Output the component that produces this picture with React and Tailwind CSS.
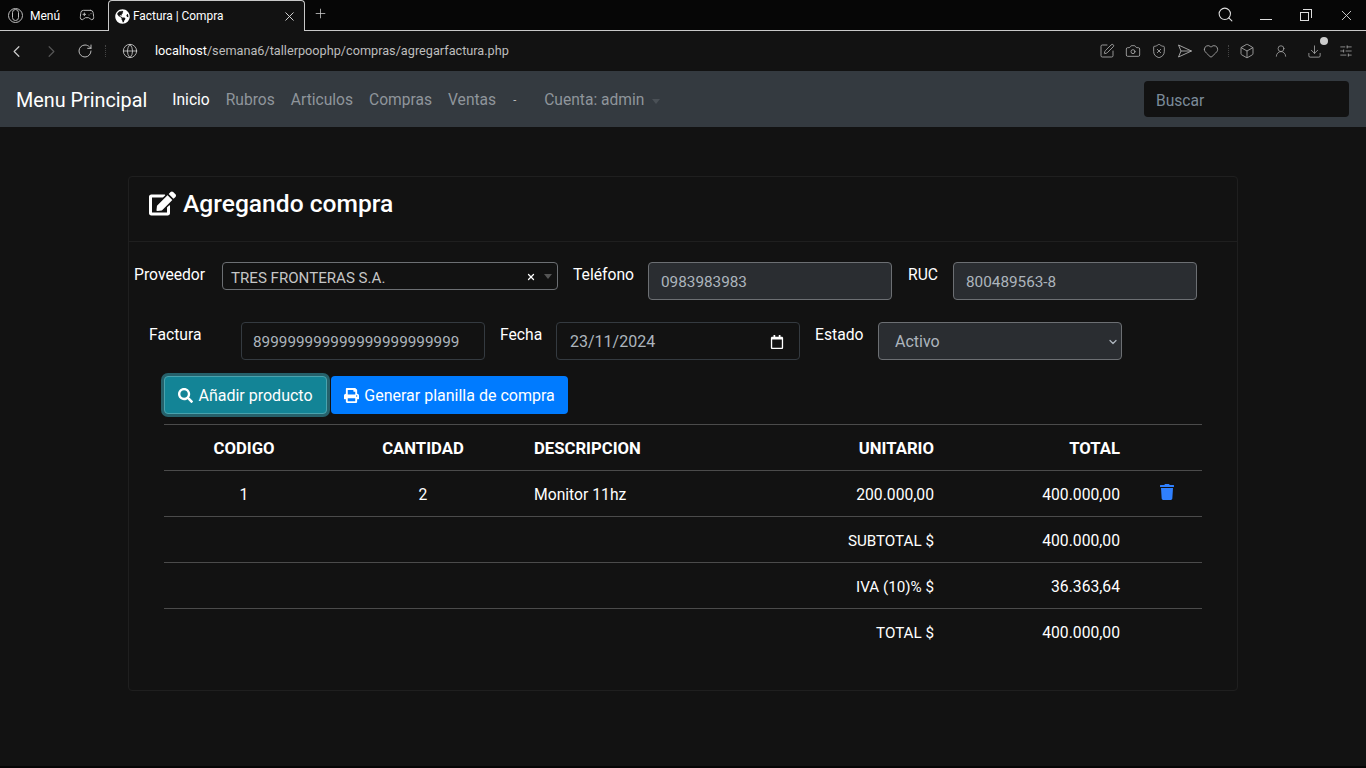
import { FaEdit, FaSearch, FaPrint, FaTrash, FaGlobeAmericas, FaRegCalendar } from "react-icons/fa";
import {
  Gamepad2,
  X,
  Plus,
  ChevronLeft,
  ChevronRight,
  RotateCw,
  Globe,
  Search,
  Camera,
  ShieldX,
  Heart,
  Box,
  UserRound,
  Download,
  SlidersHorizontal,
  SquarePen,
  ChevronDown,
} from "lucide-react";

const font = { fontFamily: "Roboto" };

function ToolbarIcon({ children, className = "" }) {
  return <div className={"flex w-[26px] justify-center " + className}>{children}</div>;
}

function BrowserChrome() {
  return (
    <div className="text-white">
      {/* Tab strip */}
      <div className="flex h-[31px] items-start bg-[#060606] border-b border-[#c8c8c8]">
        <div className="flex h-[30px] w-[108px] items-center pl-2">
          <span className="flex h-[15px] w-[15px] items-center justify-center rounded-full border border-[#bbb]">
            <span className="h-[12px] w-[7px] rounded-full border border-[#bbb]" />
          </span>
          <span className="ml-[7px] pt-[1px] text-[12px]">Menú</span>
          <Gamepad2 size={16} strokeWidth={1.5} className="ml-[19px] text-[#bbb]" />
        </div>
        <div className="flex h-[31px] w-[197px] items-center rounded-t-[4px] border-x border-t border-[#c8c8c8] bg-[#121212] pl-[6px] pr-[7px]">
          <FaGlobeAmericas size={15} />
          <span className="ml-[3px] pt-[1px] text-[11.9px]">Factura | Compra</span>
          <X size={15} strokeWidth={1.5} className="ml-auto text-[#ddd]" />
        </div>
        <Plus size={15} strokeWidth={1.25} className="ml-[8px] mt-[6px] text-[#ccc]" />
        <div className="ml-auto flex h-[30px] items-center text-[#ddd]">
          <Search size={17} strokeWidth={1.5} className="-mt-[2px]" />
          <div className="ml-[26px] mt-2 h-px w-[12px] bg-[#ddd]" />
          <div className="relative ml-[28px] h-[12px] w-[12px]">
            <div className="absolute bottom-0 left-0 h-[9px] w-[9px] border border-[#ddd]" />
            <div className="absolute right-0 top-0 h-[9px] w-[9px] border-r border-t border-[#ddd]" />
          </div>
          <X size={17} strokeWidth={1.25} className="ml-[26px] mr-[11px]" />
        </div>
      </div>
      {/* Address bar */}
      <div className="flex h-[40px] items-center bg-[#121212]">
        <ChevronLeft size={19} strokeWidth={1.5} className="ml-[7px] text-[#ccc]" />
        <ChevronRight size={19} strokeWidth={1.5} className="ml-[16px] text-[#555]" />
        <RotateCw size={16} strokeWidth={1.5} className="ml-[16px] text-[#bbb]" />
        <div className="ml-[12px] h-3 border-l border-dotted border-[#444]" />
        <Globe size={16} strokeWidth={1.25} className="ml-[16px] text-[#ccc]" />
        <span className="ml-[17px] text-[12.7px] text-[#bdbdbd]">
          <span className="text-white">localhost</span>/semana6/tallerpoophp/compras/agregarfactura.php
        </span>
        <div className="ml-auto mr-[7px] flex items-center text-[#b0b0b0]">
          <ToolbarIcon><SquarePen size={16} strokeWidth={1.25} /></ToolbarIcon>
          <ToolbarIcon><Camera size={16} strokeWidth={1.25} /></ToolbarIcon>
          <ToolbarIcon><ShieldX size={16} strokeWidth={1.25} /></ToolbarIcon>
          <ToolbarIcon>
            <svg width="16" height="16" viewBox="0 0 16 16" fill="none" stroke="currentColor" strokeWidth="0.9" strokeLinejoin="round">
              <path d="M1.5 2 L14.5 8 L1.5 14 L4 8 Z M4 8 H14.5" />
            </svg>
          </ToolbarIcon>
          <ToolbarIcon><Heart size={16} strokeWidth={1.25} /></ToolbarIcon>
          <div className="ml-1 h-3 border-l border-dotted border-[#444]" />
          <ToolbarIcon className="ml-[5px]"><Box size={16} strokeWidth={1.25} /></ToolbarIcon>
          <ToolbarIcon className="ml-[8px]"><UserRound size={14} strokeWidth={1.25} /></ToolbarIcon>
          <ToolbarIcon className="ml-[7px]">
            <div className="relative">
              <Download size={15} strokeWidth={1.25} />
              <span className="absolute -right-[6px] -top-[7px] h-[8px] w-[8px] rounded-full bg-[#ccc]" />
            </div>
          </ToolbarIcon>
          <ToolbarIcon className="ml-[6px]"><SlidersHorizontal size={14} strokeWidth={1.25} /></ToolbarIcon>
        </div>
      </div>
    </div>
  );
}

function Navbar() {
  return (
    <nav className="flex h-[56px] items-center bg-[#343a40] pl-4 pr-[17px]">
      <a className="pt-[3px] text-[19.8px] text-white">Menu Principal</a>
      <div className="ml-[25px] flex items-center pt-[4px] text-[15.6px] text-[#8f959b]">
        <a className="text-white">Inicio</a>
        <a className="ml-4">Rubros</a>
        <a className="ml-4">Articulos</a>
        <a className="ml-4">Compras</a>
        <a className="ml-4">Ventas</a>
        <a className="ml-[17px] text-[11px] text-[#c8c8c8]">-</a>
        <a className="ml-[28px]">Cuenta: admin</a>
        <span className="ml-2 mt-0.5 border-x-[4px] border-t-[5px] border-x-transparent border-t-[#4a5056]" />
      </div>
      <input
        placeholder="Buscar"
        className="ml-auto h-[36px] w-[205px] rounded-[4px] bg-[#121212] pl-[12px] pt-[3px] text-[15.6px] text-white placeholder:text-[#7b8a99]"
      />
    </nav>
  );
}

function Label({ className, children }) {
  return <label className={"mt-[1px] text-[15.7px] leading-6 text-white " + className}>{children}</label>;
}

function FilledInput({ value }) {
  return (
    <input
      readOnly
      value={value}
      className="h-[38px] w-[244px] rounded-[4px] border border-[#6c6f73] bg-[#2a2d31] px-3 pt-[1px] text-[15.3px] text-[#adb5bd]"
    />
  );
}

function CompraForm() {
  return (
    <div>
      <div className="flex items-start pt-5">
        <Label className="ml-[5px] w-[88px]">Proveedor</Label>
        <div className="flex h-[28px] w-[336px] items-center rounded-[4px] border border-[#6c6f73] pl-2 pr-[5px] text-[#c6c6c6]">
          <span className="pt-[4px] text-[15.1px]">TRES FRONTERAS S.A.</span>
          <X size={10} strokeWidth={3} className="ml-auto mt-[2px] text-white" />
          <span className="ml-[8px] border-x-[4px] border-t-[5px] border-x-transparent border-t-[#555]" />
        </div>
        <Label className="ml-[15px] w-[75px]">Teléfono</Label>
        <FilledInput value="0983983983" />
        <Label className="ml-4 w-[45px]">RUC</Label>
        <FilledInput value="800489563-8" />
      </div>
      <div className="mt-[22px] flex items-start">
        <Label className="ml-[20px] w-[92px]">Factura</Label>
        <input
          readOnly
          value="899999999999999999999999"
          className="h-[38px] w-[244px] rounded-[4px] border border-[#343a40] bg-transparent pl-[11px] pt-[1px] text-[15.3px] text-[#adb5bd]"
        />
        <Label className="ml-[15px] w-[56px]">Fecha</Label>
        <div className="flex h-[38px] w-[244px] items-center rounded-[4px] border border-[#343a40] pl-[13px] pr-[15px] pt-[1px] text-[16px] text-[#adb5bd]">
          <span>23/11/2024</span>
          <FaRegCalendar size={14} className="ml-auto text-white" />
        </div>
        <Label className="ml-[15px] w-[63px]">Estado</Label>
        <div className="flex h-[38px] w-[244px] items-center rounded-[4px] border border-[#6c6f73] bg-[#2a2d31] pl-4 pr-[2px] pt-[1px] text-[16px] text-[#adb5bd]">
          <span>Activo</span>
          <ChevronDown size={12} strokeWidth={2.5} className="ml-auto" />
        </div>
      </div>
      <div className="ml-[35px] mt-4 flex items-center">
        <button className="flex h-[38px] w-[163px] items-center justify-center gap-[5px] rounded-[4px] border border-[#4aa3ae] bg-[#138496] pt-[1px] text-[16px] text-white shadow-[0_0_0_3px_rgba(58,176,195,0.5)]">
          <FaSearch size={15} />
          Añadir producto
        </button>
        <button className="ml-1 flex h-[38px] w-[237px] items-center justify-center gap-[5px] rounded-[4px] bg-[#007bff] pt-[1px] text-[16px] text-white">
          <FaPrint size={15} />
          Generar planilla de compra
        </button>
      </div>
    </div>
  );
}

const summaryRows = [
  ["SUBTOTAL $", "400.000,00"],
  ["IVA (10)% $", "36.363,64"],
  ["TOTAL $", "400.000,00"],
];

function CompraTable() {
  const cell = "h-[46px] border-t border-[#4b4b4b] px-3 pt-[2px] text-white ";
  const td = cell + "text-[15.7px] ";
  const th = cell + "text-[16.7px] font-bold ";
  return (
    <table className="ml-[35px] mt-[10px] w-[1038px] table-fixed border-collapse">
      <colgroup>
        <col className="w-[160px]" />
        <col className="w-[198px]" />
        <col className="w-[236px]" />
        <col className="w-[188px]" />
        <col className="w-[186px]" />
        <col className="w-[70px]" />
      </colgroup>
      <thead>
        <tr>
          <th className={th + "text-center"}>CODIGO</th>
          <th className={th + "text-center"}>CANTIDAD</th>
          <th className={th + "text-left"}>DESCRIPCION</th>
          <th className={th + "text-right"}>UNITARIO</th>
          <th className={th + "text-right"}>TOTAL</th>
          <th className={th} />
        </tr>
      </thead>
      <tbody>
        <tr>
          <td className={td + "text-center"}>1</td>
          <td className={td + "text-center"}>2</td>
          <td className={td}>Monitor 11hz</td>
          <td className={td + "text-right"}>200.000,00</td>
          <td className={td + "text-right"}>400.000,00</td>
          <td className={td + "pl-[27px] pb-[5px]"}>
            <FaTrash size={16} className="text-[#2f80ff]" />
          </td>
        </tr>
        {summaryRows.map(([label, amount]) => (
          <tr key={label}>
            <td className={td} />
            <td className={td} />
            <td className={td} />
            <td className={td + "text-right"}>
              <span className="text-[15.2px]">{label}</span>
            </td>
            <td className={td + "text-right"}>{amount}</td>
            <td className={td} />
          </tr>
        ))}
      </tbody>
    </table>
  );
}

export default function App() {
  return (
    <div className="flex h-[768px] flex-col overflow-hidden bg-[#121212]" style={font}>
      <BrowserChrome />
      <Navbar />
      <main className="flex-1 px-[128px] pt-[49px]">
        <div className="h-[515px] w-[1110px] rounded-[4px] border border-[#1f1f1f]">
          <div className="flex h-[65px] items-center border-b border-[#1f1f1f] pb-[10px] pl-5">
            <FaEdit size={27} className="-mt-[2px] text-white" />
            <h3 className="ml-[7px] text-[24.6px] font-medium text-white">Agregando compra</h3>
          </div>
          <CompraForm />
          <CompraTable />
        </div>
      </main>
      <div className="h-[2px] bg-[#050505]" />
    </div>
  );
}
